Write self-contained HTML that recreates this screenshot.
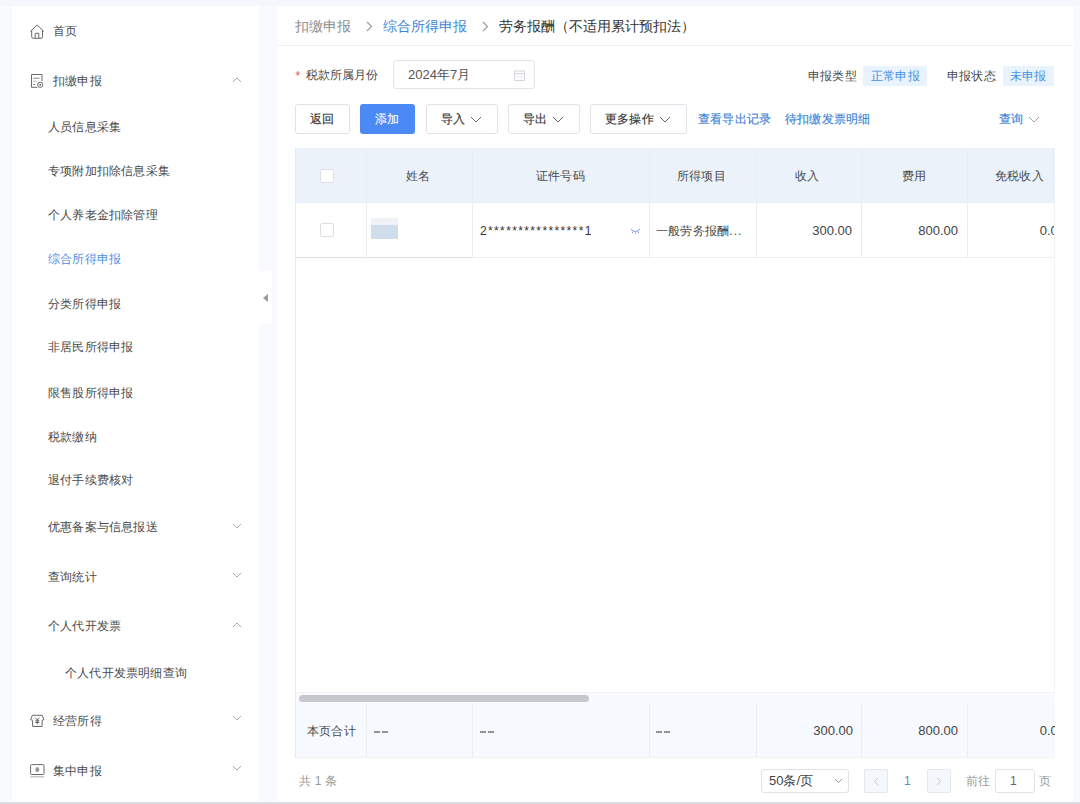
<!DOCTYPE html>
<html><head><meta charset="utf-8">
<style>
*{box-sizing:border-box;margin:0;padding:0}
html,body{width:1080px;height:804px;overflow:hidden;background:#f8fafe;font-family:"Liberation Sans",sans-serif;color:#333}
.abs{position:absolute}
#side{position:absolute;left:12px;top:6px;width:247px;height:795px;background:#fff}
#tab{position:absolute;left:259px;top:271px;width:13px;height:53px;background:#fff}
#tab i{position:absolute;left:4px;top:23px;width:0;height:0;border-top:4px solid transparent;border-bottom:4px solid transparent;border-right:5px solid #9a9a9a}
#main{position:absolute;left:278px;top:6px;width:795px;height:795px;background:#fff}
#bottom{position:absolute;left:0;top:801.5px;width:1080px;height:3px;background:#dcdee4}
.mi{position:absolute;font-size:12px;line-height:20px;height:20px;white-space:nowrap;color:#4a4a4a;letter-spacing:0.2px}
.chev{position:absolute;width:8px;height:8px}
.t14{font-size:14px}

.btn{border:1px solid #dfe2e8;border-radius:3px;background:#fff}
.b{-webkit-text-stroke:0.15px currentColor;color:#333}
.cb{width:14px;height:14px;border:1px solid #dcdfe6;border-radius:2px;background:#fff}
.vl{width:1px;background:#ececec}
.vlh{width:1px;background:#e6edf4}
.num{font-size:13px;line-height:20px;color:#444;text-align:right;white-space:nowrap}
.dash{width:6px;height:2px;background:#959595}
</style></head><body>
<div class="abs" style="left:0;top:0;width:1080px;height:6px;background:#f4f7fd"></div>
<div id="side"></div>
<div id="tab"><i></i></div>
<div id="main"></div>
<div id="bottom"></div>

<!-- sidebar -->
<svg class="abs" style="left:30px;top:24px" width="15" height="16" viewBox="0 0 15 16" fill="none" stroke="#6a6a6a" stroke-width="1" stroke-linejoin="round"><path d="M0.4 7.4 L7.1 1 L13.8 7.4"/><path d="M1.7 6.2 V12.8 Q1.7 14.3 3.2 14.3 H11 Q12.5 14.3 12.5 12.8 V6.2"/><path d="M5.2 14.3 V9.3 H8.8 V14.3"/></svg>
<div class="mi" style="left:53px;top:21px">首页</div>
<svg class="abs" style="left:31px;top:74px" width="14" height="15" viewBox="0 0 14 15" fill="none" stroke="#6a6a6a" stroke-width="1"><path d="M11 7.2 V0.5 H0.5 V13.3 H6.3"/><path d="M2.3 4.2 H8.6" stroke="#8a8a8a"/><path d="M2.3 7.2 H5.6" stroke="#9fb0c0"/><path d="M2.3 10.4 H4" stroke="#6a6a6a"/><circle cx="9.2" cy="10.8" r="2.6"/><circle cx="9.2" cy="10.8" r="0.9" fill="#555" stroke="none"/></svg>
<div class="mi" style="left:53px;top:71px">扣缴申报</div>
<svg class="abs" style="left:232px;top:77px" width="10" height="6" viewBox="0 0 10 6" fill="none" stroke="#aaa" stroke-width="1"><path d="M1 5 L5 1 L9 5"/></svg>

<div class="mi" style="left:48px;top:117px">人员信息采集</div>
<div class="mi" style="left:48px;top:161px">专项附加扣除信息采集</div>
<div class="mi" style="left:48px;top:205px">个人养老金扣除管理</div>
<div class="mi" style="left:48px;top:249px;color:#4b8fdf">综合所得申报</div>
<div class="mi" style="left:48px;top:294px">分类所得申报</div>
<div class="mi" style="left:48px;top:337px">非居民所得申报</div>
<div class="mi" style="left:48px;top:383px">限售股所得申报</div>
<div class="mi" style="left:48px;top:427px">税款缴纳</div>
<div class="mi" style="left:48px;top:470px">退付手续费核对</div>
<div class="mi" style="left:48px;top:517px">优惠备案与信息报送</div>
<svg class="abs" style="left:232px;top:523px" width="10" height="6" viewBox="0 0 10 6" fill="none" stroke="#aaa" stroke-width="1"><path d="M1 1 L5 5 L9 1"/></svg>
<div class="mi" style="left:48px;top:567px">查询统计</div>
<svg class="abs" style="left:232px;top:572px" width="10" height="6" viewBox="0 0 10 6" fill="none" stroke="#aaa" stroke-width="1"><path d="M1 1 L5 5 L9 1"/></svg>
<div class="mi" style="left:48px;top:616px">个人代开发票</div>
<svg class="abs" style="left:232px;top:622px" width="10" height="6" viewBox="0 0 10 6" fill="none" stroke="#aaa" stroke-width="1"><path d="M1 5 L5 1 L9 5"/></svg>
<div class="mi" style="left:65px;top:663px">个人代开发票明细查询</div>
<svg class="abs" style="left:30px;top:714px" width="15" height="14" viewBox="0 0 15 14" fill="none" stroke="#6a6a6a" stroke-width="1" stroke-linejoin="round"><path d="M2.3 1.3 H12.2 L13.9 5.6 L12.1 6.4 V12.5 H2.6 V6.4 L0.6 5.6 Z"/><path d="M5.3 3.6 L7.3 6 L9.3 3.6 M7.3 6 V10.2 M5.3 6.8 H9.3 M5.3 8.4 H9.3" stroke="#555" stroke-width="0.9"/></svg>
<div class="mi" style="left:53px;top:711px">经营所得</div>
<svg class="abs" style="left:232px;top:715px" width="10" height="6" viewBox="0 0 10 6" fill="none" stroke="#aaa" stroke-width="1"><path d="M1 1 L5 5 L9 1"/></svg>
<svg class="abs" style="left:30px;top:764px" width="15" height="14" viewBox="0 0 15 14" fill="none" stroke="#6a6a6a" stroke-width="1"><rect x="0.6" y="0.6" width="13.4" height="9.9" rx="0.8"/><path d="M0.3 12.8 H14.2" stroke="#c2c2c2" stroke-width="1.4"/><ellipse cx="7.3" cy="5.6" rx="2" ry="2.6" fill="#9a9a9a" stroke="none"/></svg>
<div class="mi" style="left:53px;top:761px">集中申报</div>
<svg class="abs" style="left:232px;top:765px" width="10" height="6" viewBox="0 0 10 6" fill="none" stroke="#aaa" stroke-width="1"><path d="M1 1 L5 5 L9 1"/></svg>


<!-- breadcrumb -->
<div class="abs" style="left:278px;top:45px;width:795px;height:1px;background:#eef0f3"></div>
<div class="abs t14" style="left:295px;top:16px;line-height:20px;color:#8c8c8c">扣缴申报</div>
<svg class="abs" style="left:366px;top:21px" width="7" height="11" viewBox="0 0 7 11" fill="none" stroke="#999" stroke-width="1.1"><path d="M1 1 L5.5 5.5 L1 10"/></svg>
<div class="abs t14" style="left:383px;top:16px;line-height:20px;color:#3d86d6">综合所得申报</div>
<svg class="abs" style="left:482px;top:21px" width="7" height="11" viewBox="0 0 7 11" fill="none" stroke="#999" stroke-width="1.1"><path d="M1 1 L5.5 5.5 L1 10"/></svg>
<div class="abs t14" style="left:499px;top:16px;line-height:20px;color:#333">劳务报酬（不适用累计预扣法）</div>

<!-- form row -->
<div class="abs" style="left:295.5px;top:69px;font-size:12px;line-height:14px;color:#e5533c">*</div>
<div class="mi" style="left:305.5px;top:65px">税款所属月份</div>
<div class="abs" style="left:393px;top:60px;width:142px;height:29px;border:1px solid #e2e4e9;border-radius:3px"></div>
<div class="abs" style="left:408px;top:65px;font-size:13px;line-height:20px;color:#555">2024年7月</div>
<svg class="abs" style="left:514px;top:70px" width="11" height="11" viewBox="0 0 11 11" fill="none" stroke="#cfd2d7" stroke-width="0.9"><rect x="0.5" y="1" width="10" height="9.5"/><path d="M0.5 3.6 H10.5"/><path d="M3.7 4 V10 M7 4 V10 M1 6 H10 M1 8 H10" stroke="#eef0f3" stroke-width="0.6"/></svg>

<div class="mi" style="left:808px;top:66px">申报类型</div>
<div class="abs" style="left:863px;top:66px;width:64px;height:20px;background:#e8f3fd;border-radius:2px"></div>
<div class="mi" style="left:871px;top:66px;color:#4a90e2">正常申报</div>
<div class="mi" style="left:947px;top:66px">申报状态</div>
<div class="abs" style="left:1003px;top:66px;width:51px;height:20px;background:#e8f3fd;border-radius:2px"></div>
<div class="mi" style="left:1010px;top:66px;color:#4a90e2">未申报</div>

<!-- buttons -->
<div class="abs btn" style="left:295px;top:104px;width:55px;height:30px"></div>
<div class="mi b" style="left:310px;top:109px">返回</div>
<div class="abs" style="left:360px;top:104px;width:55px;height:30px;background:#4b8af5;border-radius:3px"></div>
<div class="mi b" style="left:375px;top:109px;color:#fff;-webkit-text-stroke:0.1px #fff">添加</div>
<div class="abs btn" style="left:426px;top:104px;width:72px;height:30px"></div>
<div class="mi b" style="left:441px;top:109px">导入</div>
<svg class="abs chv" style="left:470px;top:116px" width="12" height="7" viewBox="0 0 12 7" fill="none" stroke="#666" stroke-width="1"><path d="M1 1 L6 6 L11 1"/></svg>
<div class="abs btn" style="left:508px;top:104px;width:72px;height:30px"></div>
<div class="mi b" style="left:523px;top:109px">导出</div>
<svg class="abs chv" style="left:552px;top:116px" width="12" height="7" viewBox="0 0 12 7" fill="none" stroke="#666" stroke-width="1"><path d="M1 1 L6 6 L11 1"/></svg>
<div class="abs btn" style="left:590px;top:104px;width:97px;height:30px"></div>
<div class="mi b" style="left:605px;top:109px">更多操作</div>
<svg class="abs chv" style="left:659px;top:116px" width="12" height="7" viewBox="0 0 12 7" fill="none" stroke="#666" stroke-width="1"><path d="M1 1 L6 6 L11 1"/></svg>
<div class="mi b" style="left:698px;top:109px;color:#3b7fd6">查看导出记录</div>
<div class="mi b" style="left:785px;top:109px;color:#3b7fd6">待扣缴发票明细</div>
<div class="mi b" style="left:999px;top:109px;color:#3b7fd6">查询</div>
<svg class="abs" style="left:1028px;top:116px" width="12" height="7" viewBox="0 0 12 7" fill="none" stroke="#9aa3b0" stroke-width="1"><path d="M1 1 L6 6 L11 1"/></svg>

<!-- table -->
<div class="abs" style="left:295px;top:148px;width:760px;height:55px;background:#ecf2f9"></div>

<div class="abs" style="left:295px;top:202px;width:760px;height:1px;background:#e9eff6"></div>
<div class="abs" style="left:295px;top:257px;width:177px;height:1px;background:#e0e0e0"></div>
<div class="abs" style="left:472px;top:257px;width:583px;height:1px;background:#efefef"></div>
<div class="abs cb" style="left:320px;top:169px"></div>
<div class="abs cb" style="left:320px;top:223px"></div>
<div class="mi" style="left:406px;top:166px">姓名</div>
<div class="mi" style="left:536px;top:166px">证件号码</div>
<div class="mi" style="left:677px;top:166px">所得项目</div>
<div class="mi" style="left:795px;top:166px">收入</div>
<div class="mi" style="left:902px;top:166px">费用</div>
<div class="mi" style="left:995px;top:166px">免税收入</div>
<div class="abs" style="left:371px;top:218px;width:27px;height:7px;background:#eef2f6"></div>
<div class="abs" style="left:371px;top:225px;width:27px;height:14px;background:#d0deec"></div>
<div class="abs" style="left:480px;top:221px;font-size:12px;line-height:20px;color:#333;letter-spacing:1.37px">2****************1</div>
<svg class="abs" style="left:630px;top:228px" width="11" height="6" viewBox="0 0 11 6" fill="none" stroke="#6a8cc8" stroke-width="0.9"><path d="M1 1 Q5.5 6 10 1 M3 3.5 L2.3 5 M5.5 4.3 V5.8 M8 3.5 L8.7 5"/></svg>
<div class="mi" style="left:656px;top:221px">一般劳务报酬<span style="letter-spacing:1.1px">...</span></div>
<div class="abs num" style="left:756px;top:221px;width:96px">300.00</div>
<div class="abs num" style="left:861px;top:221px;width:97px">800.00</div>
<div class="abs" style="left:967px;top:200px;width:88px;height:58px;overflow:hidden"><div class="abs num" style="left:2px;top:21px;width:96px">0.00</div></div>
<!-- col borders -->
<div class="abs vlh" style="left:366px;top:148px;height:54px"></div><div class="abs vl" style="left:366px;top:203px;height:55px"></div>
<div class="abs vlh" style="left:472px;top:148px;height:54px"></div><div class="abs vl" style="left:472px;top:203px;height:55px"></div>
<div class="abs vlh" style="left:649px;top:148px;height:54px"></div><div class="abs vl" style="left:649px;top:203px;height:55px"></div>
<div class="abs vlh" style="left:756px;top:148px;height:54px"></div><div class="abs vl" style="left:756px;top:203px;height:55px"></div>
<div class="abs vlh" style="left:861px;top:148px;height:54px"></div><div class="abs vl" style="left:861px;top:203px;height:55px"></div>
<div class="abs vlh" style="left:967px;top:148px;height:54px"></div><div class="abs vl" style="left:967px;top:203px;height:55px"></div>

<div class="abs" style="left:295px;top:692px;width:760px;height:1px;background:#f2f4f4"></div>
<div class="abs" style="left:295px;top:693px;width:760px;height:65px;background:linear-gradient(#fafbfe,#f6f9fd 10px)"></div>
<div class="abs" style="left:1054px;top:203px;width:1px;height:490px;background:#f2f2f2"></div>
<div class="abs" style="left:299px;top:695px;width:290px;height:7px;background:#c6c8cc;border-radius:3.5px"></div>
<div class="abs" style="left:295px;top:757px;width:760px;height:1px;background:#f0f2f5"></div>
<div class="abs vl" style="left:366px;top:704px;height:54px"></div>
<div class="abs vl" style="left:472px;top:704px;height:54px"></div>
<div class="abs vl" style="left:649px;top:704px;height:54px"></div>
<div class="abs vl" style="left:756px;top:704px;height:54px"></div>
<div class="abs vl" style="left:861px;top:704px;height:54px"></div>
<div class="abs vl" style="left:967px;top:704px;height:54px"></div>
<div class="mi" style="left:307px;top:721px">本页合计</div>
<div class="abs dash" style="left:374px;top:731px"></div><div class="abs dash" style="left:382px;top:731px"></div>
<div class="abs dash" style="left:480px;top:731px"></div><div class="abs dash" style="left:488px;top:731px"></div>
<div class="abs dash" style="left:656px;top:731px"></div><div class="abs dash" style="left:664px;top:731px"></div>
<div class="abs num" style="left:756px;top:721px;width:97px">300.00</div>
<div class="abs num" style="left:861px;top:721px;width:97px">800.00</div>
<div class="abs" style="left:967px;top:702px;width:88px;height:56px;overflow:hidden"><div class="abs num" style="left:2px;top:19px;width:96px">0.00</div></div>

<div class="abs" style="left:295px;top:148px;width:1px;height:610px;background:#e8e9eb"></div>
<!-- pagination -->
<div class="mi" style="left:299px;top:771px;color:#999">共 1 条</div>
<div class="abs" style="left:761px;top:769px;width:88px;height:24px;border:1px solid #dfe2e8;border-radius:3px"></div>
<div class="abs" style="left:769px;top:771px;font-size:13px;line-height:20px;color:#444">50条/页</div>
<svg class="abs" style="left:834px;top:778px" width="9" height="6" viewBox="0 0 9 6" fill="none" stroke="#999" stroke-width="1"><path d="M1 1 L4.5 4.5 L8 1"/></svg>
<div class="abs" style="left:864px;top:769px;width:24px;height:24px;border:1px solid #e4e7ed;border-radius:2px;background:#f4f7fb"></div>
<svg class="abs" style="left:873px;top:777px" width="6" height="9" viewBox="0 0 6 9" fill="none" stroke="#c5c8ce" stroke-width="1"><path d="M5 1 L1.5 4.5 L5 8"/></svg>
<div class="mi" style="left:904px;top:771px;color:#5b8ac6">1</div>
<div class="abs" style="left:927px;top:769px;width:24px;height:24px;border:1px solid #e4e7ed;border-radius:2px;background:#f4f7fb"></div>
<svg class="abs" style="left:936px;top:777px" width="6" height="9" viewBox="0 0 6 9" fill="none" stroke="#c5c8ce" stroke-width="1"><path d="M1 1 L4.5 4.5 L1 8"/></svg>
<div class="mi" style="left:966px;top:771px;color:#999">前往</div>
<div class="abs" style="left:995px;top:769px;width:40px;height:24px;border:1px solid #dfe2e8;border-radius:3px"></div>
<div class="mi" style="left:1010px;top:771px;color:#666">1</div>
<div class="mi" style="left:1039px;top:771px;color:#999">页</div>
</body></html>
